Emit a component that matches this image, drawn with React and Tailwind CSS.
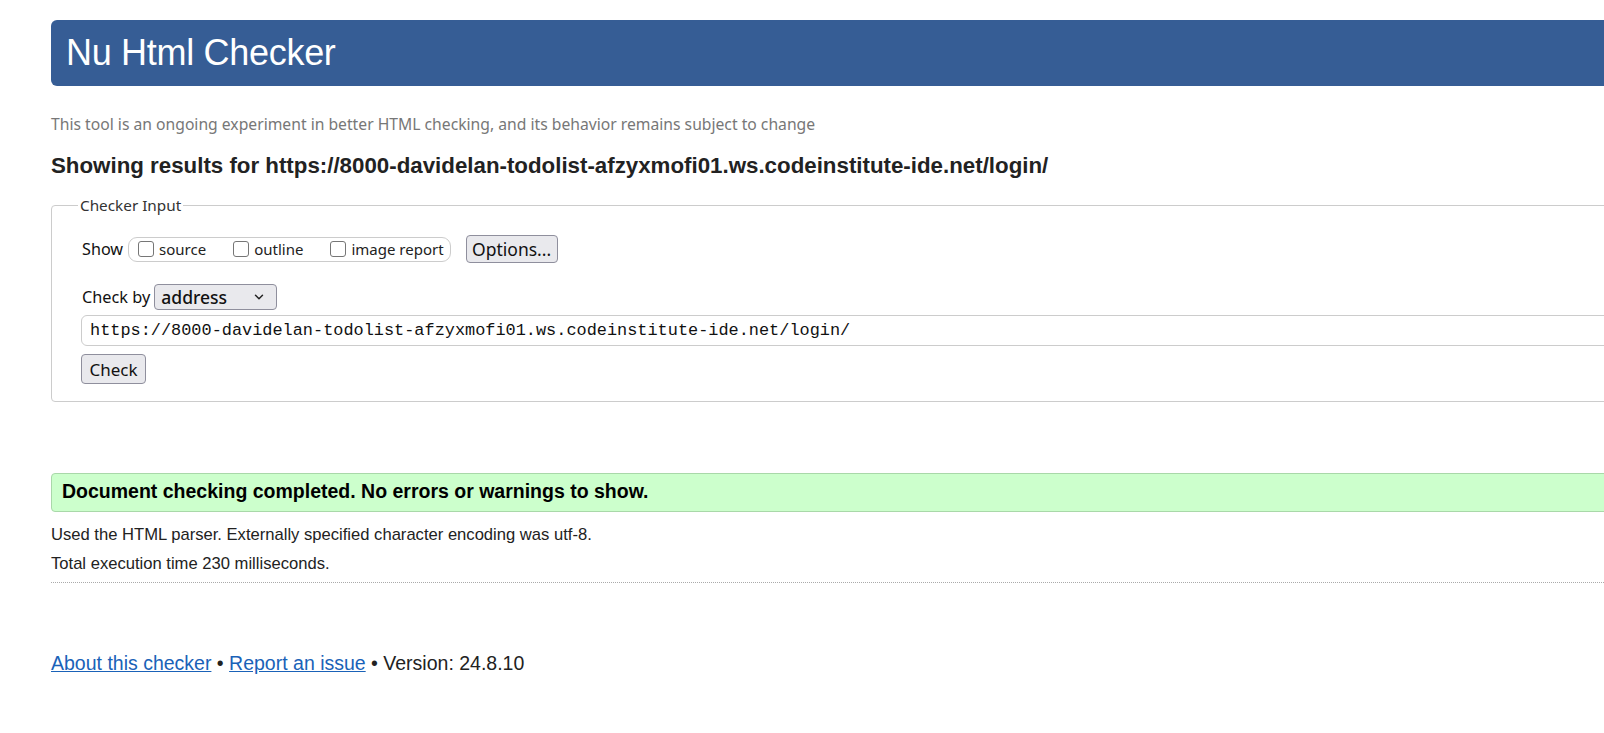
import { ChevronDown } from "lucide-react";

const ui = { fontFamily: '"Noto Sans", "Open Sans", sans-serif' };

function Box({ label }) {
  return (
    <label className="flex items-center gap-[5px] text-[15px] text-[#222]" style={ui}>
      <span className="inline-block w-[16px] h-[16px] rounded-[3px] border-[1.5px] border-[#767676] bg-white" />
      {label}
    </label>
  );
}

export default function App() {
  return (
    <div
      className="w-screen min-h-screen overflow-hidden bg-white text-[#111]"
      style={{ fontFamily: '"Liberation Sans", Arial, sans-serif' }}
    >
      <div className="w-[1720px] pl-[51px] pt-5">
        {/* header */}
        <div className="h-[66px] bg-[#365d95] rounded-[6px] flex items-center pl-[15px]">
          <h1 className="text-white text-[36px] leading-none tracking-[-0.3px]">Nu Html Checker</h1>
        </div>

        <p className="mt-[27px] text-[15.7px] text-[#777]" style={ui}>
          This tool is an ongoing experiment in better HTML checking, and its behavior remains subject to change
        </p>

        <h2 className="mt-[16px] text-[22.3px] font-bold text-[#222] leading-[26px]">
          Showing results for https://8000-davidelan-todolist-afzyxmofi01.ws.codeinstitute-ide.net/login/
        </h2>

        {/* checker input */}
        <fieldset className="mt-[15px] h-[208px] border border-[#ccc] rounded-[4px] pl-[30px] pt-[19px]">
          <legend className="ml-[-4px] px-[2px] text-[15.3px] text-[#333]" style={ui}>
            Checker Input
          </legend>

          <div className="flex items-center h-[28px]">
            <span className="text-[16.2px] text-[#111]" style={ui}>Show</span>
            <div className="ml-[5px] h-[25px] border border-[#ccc] rounded-[9px] flex items-center pl-[9px] pr-[6px] gap-[27px]">
              <Box label="source" />
              <Box label="outline" />
              <Box label="image report" />
            </div>
            <button
              className="ml-[15px] h-[28px] w-[92px] rounded-[4px] border border-[#8f8f9d] bg-[#e9e9ed] text-[17.5px] text-[#111]"
              style={ui}
            >
              Options...
            </button>
          </div>

          <div className="flex items-center mt-[21px] h-[26px]">
            <span className="text-[16.3px] text-[#111]" style={ui}>Check by</span>
            <div
              className="ml-[4px] h-[26px] w-[123px] rounded-[4px] border border-[#8f8f9d] bg-[#e9e9ed] flex items-center justify-between pl-[6px] pr-[10px]"
              style={ui}
            >
              <span className="text-[17.5px] font-medium text-[#111]">address</span>
              <ChevronDown size={14} strokeWidth={2.5} className="text-[#222]" />
            </div>
          </div>

          <div className="mt-[5px] h-[31px] ml-[-1px] border border-[#ccc] rounded-[6px] flex items-center pl-[8px]">
            <span className="text-[16.9px] text-[#111]" style={{ fontFamily: '"Liberation Mono", "DejaVu Sans Mono", monospace' }}>
              https://8000-davidelan-todolist-afzyxmofi01.ws.codeinstitute-ide.net/login/
            </span>
          </div>

          <button
            className="mt-[8px] ml-[-1px] h-[30px] w-[65px] rounded-[4px] border border-[#8f8f9d] bg-[#e9e9ed] text-[17px] text-[#111]"
            style={ui}
          >
            Check
          </button>
        </fieldset>

        {/* success */}
        <div className="mt-[71px] h-[39px] bg-[#ccffcc] border border-[#a9d8a9] rounded-[4px] flex items-center pl-[10px]">
          <p className="text-[19.5px] font-bold text-black">Document checking completed. No errors or warnings to show.</p>
        </div>

        <p className="mt-[13px] text-[16.6px] text-[#222] leading-[19px]">
          Used the HTML parser. Externally specified character encoding was utf-8.
        </p>
        <p className="mt-[10px] text-[16.6px] text-[#222] leading-[19px]">Total execution time 230 milliseconds.</p>

        <div className="mt-[9px] border-t border-dotted border-[#aaa]" />

        <p className="mt-[66px] text-[19.5px] text-[#222]">
          <a href="#" className="text-[#1a62b8] underline">About this checker</a>
          {" • "}
          <a href="#" className="text-[#1a62b8] underline">Report an issue</a>
          {" • Version: 24.8.10"}
        </p>
      </div>
    </div>
  );
}
